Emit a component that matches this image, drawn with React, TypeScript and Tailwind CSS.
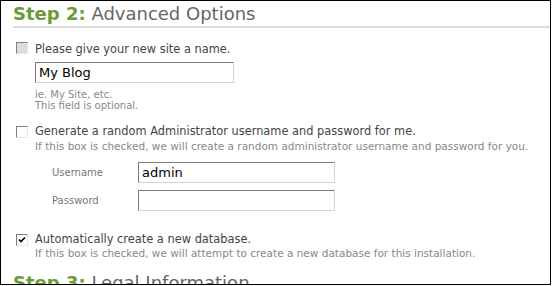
import React from "react";

const font = { fontFamily: '"DejaVu Sans", Verdana, sans-serif' };

const Check: React.FC<{ checked?: boolean; disabled?: boolean }> = ({ checked, disabled }) => (
  <span
    className={`mt-[2px] flex h-[12px] w-[12px] shrink-0 items-center justify-center border border-t-[#808080] border-l-[#808080] border-b-[#e6e6e6] border-r-[#e6e6e6] ${
      disabled ? "bg-[#dcdcdc]" : "bg-white"
    }`}
  >
    {checked && (
      <svg width="8" height="8" viewBox="0 0 8 8">
        <path d="M1 3.5 L3 5.5 L7 1.5" stroke="#000" strokeWidth="1.6" fill="none" />
      </svg>
    )}
  </span>
);

const Field: React.FC<{ value?: string; width: string }> = ({ value, width }) => (
  <div
    className={`${width} h-[21px] border border-t-[#7a7a7a] border-l-[#7a7a7a] border-b-[#d4d4d4] border-r-[#d4d4d4] bg-white px-[3px] text-[13px] leading-[19px] text-black`}
  >
    {value}
  </div>
);

export default function App() {
  return (
    <div style={font} className="h-[286px] w-[552px] bg-white">
      <div className="h-[285px] w-[551px] overflow-hidden border border-black">
        {/* Step 2 heading */}
        <h2 className="ml-[12px] mt-[2px] border-b-2 border-[#dddddd] pb-[1px] text-[18px] leading-[22px] text-[#666]">
          <span className="font-bold text-[#6b9a3a]">Step 2:</span> Advanced Options
        </h2>

        {/* site name */}
        <div className="ml-[15px] mt-[12px] flex gap-[7px]">
          <Check disabled />
          <div>
            <p className="mt-[2px] text-[11.4px] leading-[15px] text-[#444]">Please give your new site a name.</p>
            <div className="mt-[5px]">
              <Field value="My Blog" width="w-[199px]" />
            </div>
            <p className="mt-[6px] text-[10px] leading-[11px] text-[#888]">ie. My Site, etc.</p>
            <p className="text-[10px] leading-[11px] text-[#888]">This field is optional.</p>
          </div>
        </div>

        {/* random admin */}
        <div className="ml-[15px] mt-[13px] flex gap-[7px]">
          <Check />
          <div>
            <p className="text-[11.4px] leading-[15px] text-[#444]">
              Generate a random Administrator username and password for me.
            </p>
            <p className="text-[10.5px] leading-[14px] text-[#888]">
              If this box is checked, we will create a random administrator username and password for you.
            </p>
            <div className="mt-[9px] grid grid-cols-[86px_197px] items-center gap-y-[7px] pl-[17px]">
              <span className="text-[10px] text-[#777]">Username</span>
              <Field value="admin" width="w-[197px]" />
              <span className="text-[10px] text-[#777]">Password</span>
              <Field width="w-[197px]" />
            </div>
          </div>
        </div>

        {/* database */}
        <div className="ml-[15px] mt-[21px] flex gap-[7px]">
          <Check checked />
          <div>
            <p className="text-[11.4px] leading-[15px] text-[#444]">Automatically create a new database.</p>
            <p className="text-[10.5px] leading-[13px] text-[#888]">
              If this box is checked, we will attempt to create a new database for this installation.
            </p>
          </div>
        </div>

        {/* Step 3 heading, cut off by the frame */}
        <h2 className="ml-[12px] mt-[12px] text-[18px] leading-[22px] text-[#666]">
          <span className="font-bold text-[#6b9a3a]">Step 3:</span> Legal Information
        </h2>
      </div>
    </div>
  );
}
